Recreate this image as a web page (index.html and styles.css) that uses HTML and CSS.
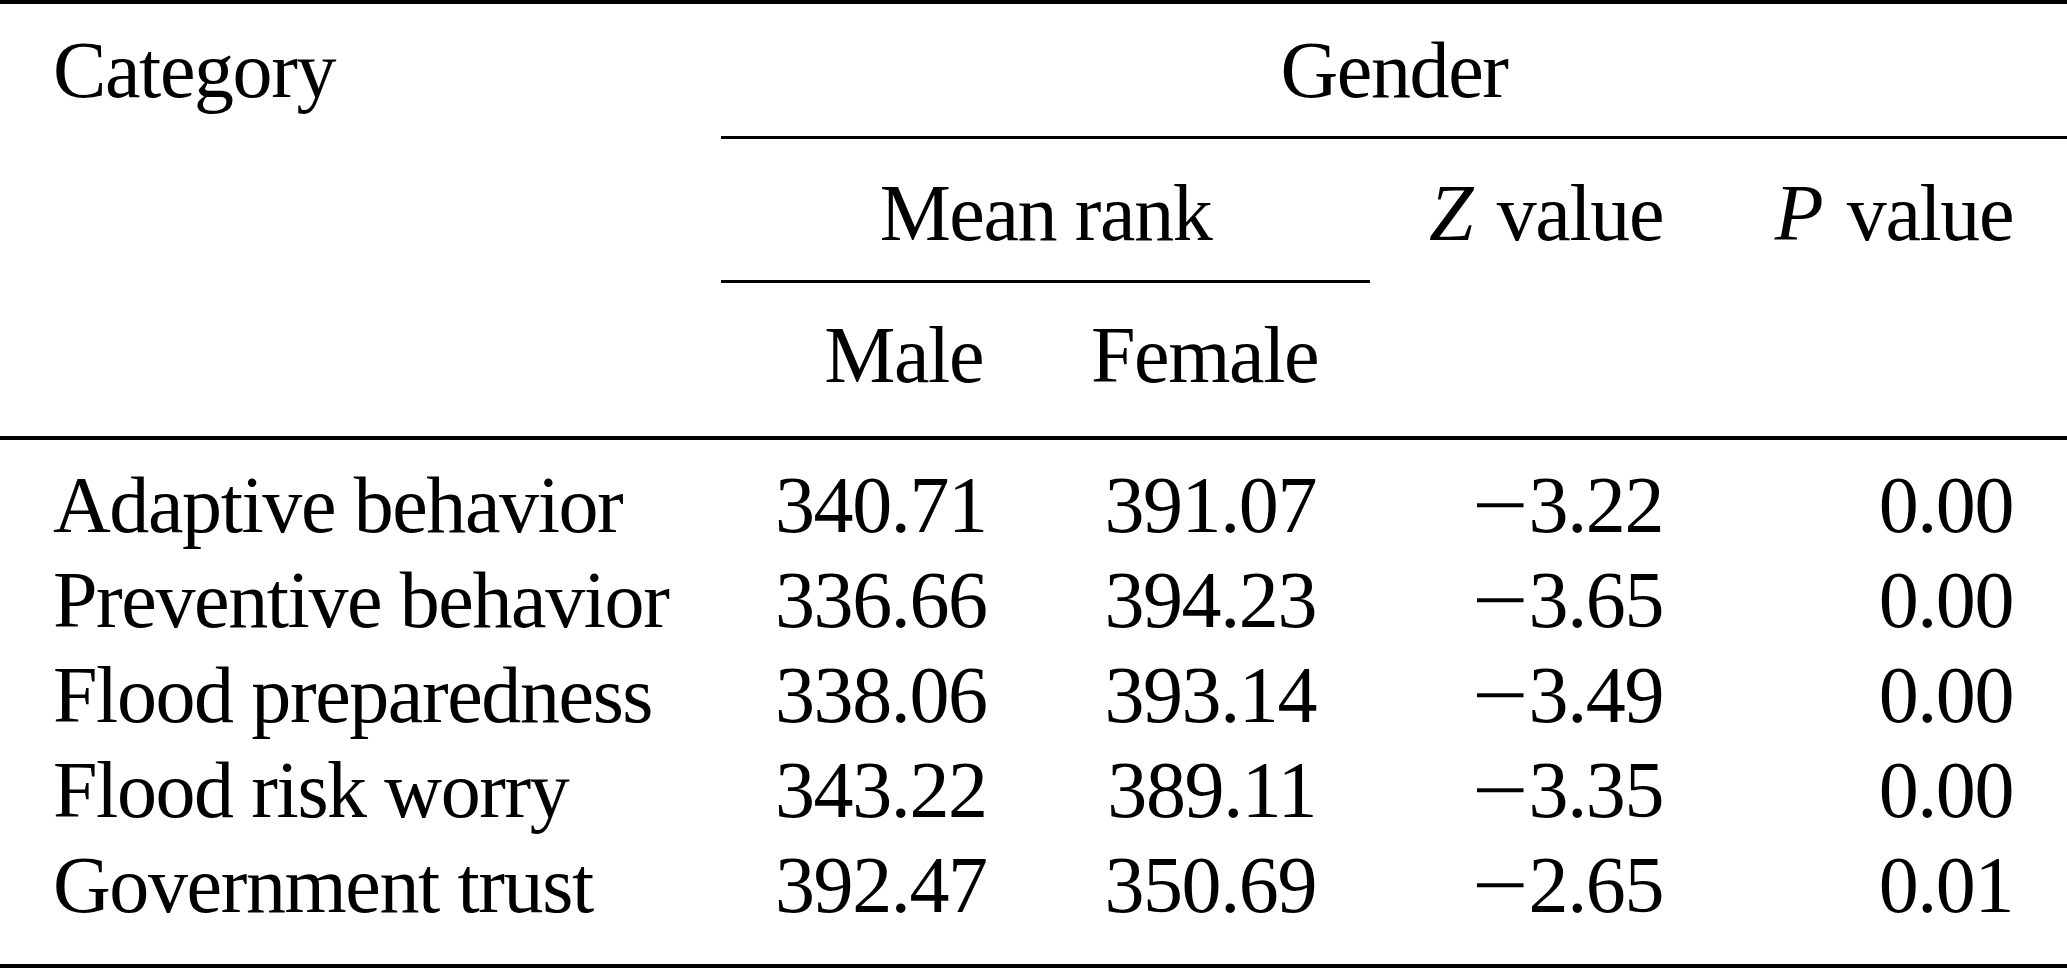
FILE: index.html
```html
<!DOCTYPE html>
<html lang="en">
<head>
<meta charset="utf-8">
<title>Gender differences</title>
<link rel="stylesheet" href="styles.css">
</head>
<body>
<table class="stats">
  <colgroup>
    <col class="c-cat">
    <col class="c-male">
    <col class="c-female">
    <col class="c-z">
    <col class="c-p">
  </colgroup>
  <thead>
    <tr class="row-a">
      <th class="cat" rowspan="3">Category</th>
      <th class="gender" colspan="4">Gender</th>
    </tr>
    <tr class="row-b">
      <th class="mean" colspan="2">Mean rank</th>
      <th class="stat" rowspan="2"><i>Z</i> value</th>
      <th class="stat" rowspan="2"><i>P</i> value</th>
    </tr>
    <tr class="row-c">
      <th class="sex">Male</th>
      <th class="sex">Female</th>
    </tr>
  </thead>
  <tbody>
    <tr class="first">
      <td class="label">Adaptive behavior</td>
      <td>340.71</td>
      <td>391.07</td>
      <td><span class="minus">&minus;</span>3.22</td>
      <td>0.00</td>
    </tr>
    <tr>
      <td class="label">Preventive behavior</td>
      <td>336.66</td>
      <td>394.23</td>
      <td><span class="minus">&minus;</span>3.65</td>
      <td>0.00</td>
    </tr>
    <tr>
      <td class="label">Flood preparedness</td>
      <td>338.06</td>
      <td>393.14</td>
      <td><span class="minus">&minus;</span>3.49</td>
      <td>0.00</td>
    </tr>
    <tr>
      <td class="label">Flood risk worry</td>
      <td>343.22</td>
      <td>389.11</td>
      <td><span class="minus">&minus;</span>3.35</td>
      <td>0.00</td>
    </tr>
    <tr class="last">
      <td class="label">Government trust</td>
      <td>392.47</td>
      <td>350.69</td>
      <td><span class="minus">&minus;</span>2.65</td>
      <td>0.01</td>
    </tr>
  </tbody>
</table>
</body>
</html>
```

FILE: styles.css
```css
html, body {
  margin: 0;
  padding: 0;
  background: #ffffff;
}

.stats {
  width: 2067px;
  table-layout: fixed;
  border-collapse: separate;
  border-spacing: 0;
  border-top: 4px solid #000;
  border-bottom: 4px solid #000;
  font-family: "Liberation Serif", "Times New Roman", serif;
  font-size: 80px;
  letter-spacing: -1.4px;
  color: #000;
  line-height: 95px;
}

.c-cat { width: 721px; }
.c-male { width: 316px; }
.c-female { width: 333px; }
.c-z { width: 347px; }
.c-p { width: 350px; }

.stats th,
.stats td {
  font-weight: normal;
  padding: 0 54px;
  text-align: right;
  vertical-align: top;
  white-space: nowrap;
}

.stats i {
  font-style: italic;
  margin-right: 6px;
}

.minus {
  display: inline-block;
  transform: scaleX(1.25);
  transform-origin: left center;
  margin-right: 13px;
}

/* header rows */
.stats th.cat {
  text-align: left;
  padding: 18.5px 0 0 53px;
  border-bottom: 4px solid #000;
}

.stats th.gender {
  text-align: center;
  padding: 18.5px 0;
  border-bottom: 3px solid #000;
}

.stats th.mean {
  text-align: center;
  padding: 26.5px 0 19.5px;
  border-bottom: 3px solid #000;
}

.stats th.stat {
  padding-top: 26.5px;
  border-bottom: 4px solid #000;
}

.stats th.sex {
  padding-top: 24.5px;
  padding-bottom: 33.5px;
  border-bottom: 4px solid #000;
}

/* body rows */
.stats td.label {
  text-align: left;
  padding-left: 53px;
  padding-right: 0;
}

.stats tr.first td {
  padding-top: 17.5px;
}

.stats tr.last td {
  padding-bottom: 31.5px;
}
```
